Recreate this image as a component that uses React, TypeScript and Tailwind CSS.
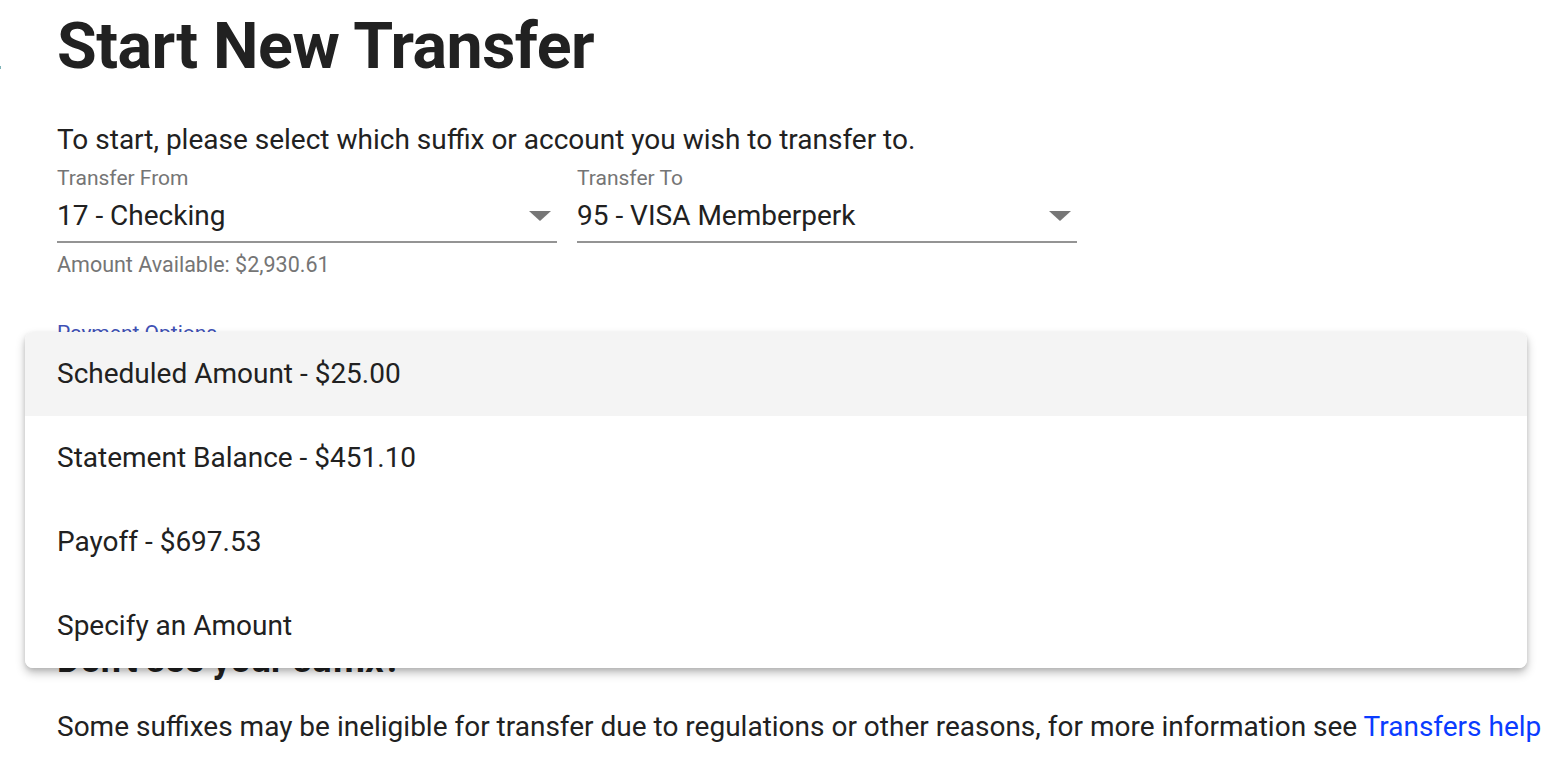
import { useState } from 'react';

interface SelectFieldProps {
    label: string;
    value: string;
    helper?: string;
}

function SelectField({ label, value, helper }: SelectFieldProps) {
    return (
        <div className="flex flex-col w-[500px]">
            <span className="text-[21px] leading-[26px] text-[#757575]">{label}</span>
            <div className="flex flex-row items-center justify-between h-[52px] border-b-2 border-[#949494] pr-[6px]">
                <span className="text-[28px] leading-[34px] text-[#212121]">{value}</span>
                <svg width="22" height="10" viewBox="0 0 22 10">
                    <polygon points="0,0 22,0 11,10" fill="#777777" />
                </svg>
            </div>
            {helper && <span className="text-[21.5px] leading-[26px] text-[#757575] mt-[9px]">{helper}</span>}
        </div>
    );
}

const PAYMENT_OPTIONS = [
    'Scheduled Amount - $25.00',
    'Statement Balance - $451.10',
    'Payoff - $697.53',
    'Specify an Amount',
];

export default function App() {
    const [selected] = useState<number>(0);

    return (
        <div className="relative min-h-[768px] bg-white font-['Roboto',sans-serif] text-[#212121] overflow-hidden">
            {/* little mark on the left edge */}
            <div className="absolute left-0 top-[66px] w-[1px] h-[3px] bg-[#7fb3b8]" />

            <div className="pl-[57px] pt-[8px]">
                <h1 className="text-[64.5px] leading-[76px] font-bold tracking-[-0.5px]">Start New Transfer</h1>

                <p className="mt-[39px] text-[28px] leading-[34px]">To start, please select which suffix or account you wish to transfer to.</p>

                <div className="flex flex-row gap-x-[20px] mt-[8px]">
                    <SelectField label="Transfer From" value="17 - Checking" helper="Amount Available: $2,930.61" />
                    <SelectField label="Transfer To" value="95 - VISA Memberperk" />
                </div>

                <div className="mt-[42px] flex flex-col w-[500px]">
                    <span className="text-[21px] leading-[26px] text-[#3f51b5]">Payment Options</span>
                    <div className="h-[50px] border-b-2 border-[#3f51b5]" />
                </div>

                <h2 className="mt-[242px] text-[36px] leading-[44px] font-bold">Don't see your suffix?</h2>

                <p className="mt-[28px] text-[28px] leading-[34px]">
                    Some suffixes may be ineligible for transfer due to regulations or other reasons, for more information see{' '}
                    <a className="text-[#0a3cff]" href="#">Transfers help</a>
                </p>
            </div>

            {/* open dropdown menu for Payment Options */}
            <div className="absolute left-[25px] top-[332px] w-[1502px] bg-white rounded-[8px] overflow-hidden shadow-[0_5px_10px_rgba(0,0,0,0.25),0_2px_4px_rgba(0,0,0,0.1)]">
                {PAYMENT_OPTIONS.map((opt, i) => (
                    <div
                        key={opt}
                        className={`h-[84px] flex items-center pl-[32px] text-[28px] ${i === selected ? 'bg-[#f4f4f4]' : 'bg-white'}`}
                    >
                        {opt}
                    </div>
                ))}
            </div>
        </div>
    );
}
